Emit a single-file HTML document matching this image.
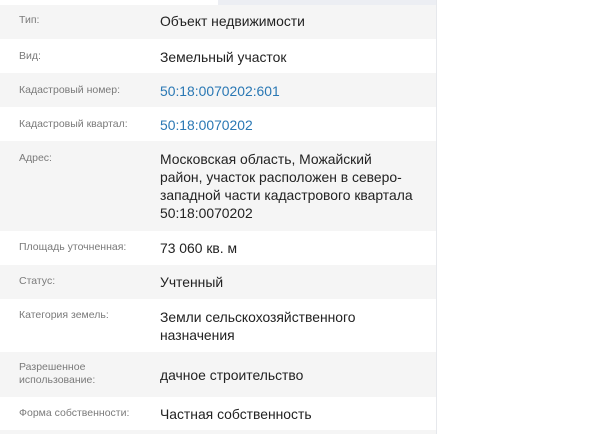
<!DOCTYPE html>
<html><head><meta charset="utf-8"><style>
*{margin:0;padding:0;box-sizing:border-box}
body{width:600px;height:434px;background:#fff;position:relative;overflow:hidden;font-family:"Liberation Sans",sans-serif}
.panel{position:absolute;left:0;top:0;width:437px;height:434px;background:#fff;border-right:1px solid #e6e8ec}
.top{position:absolute;left:218px;top:0;width:218px;height:5px;background:#eceef3}
.r{position:absolute;left:0;width:436px}
.g{background:#f5f5f5}
.l{position:absolute;left:19px;font-size:10.5px;color:#7a7a7a;line-height:13px}
.v{position:absolute;left:160px;font-size:13.9px;color:#222;line-height:18px}
.a{color:#2a78b4}
</style></head><body>
<div class="panel">
<div class="top"></div>
<div class="r g" style="top:5px;height:34px"><div class="l" style="top:9px">Тип:</div><div class="v" style="top:7px">Объект недвижимости</div></div>
<div class="r" style="top:39px;height:34px"><div class="l" style="top:11px">Вид:</div><div class="v" style="top:9px">Земельный участок</div></div>
<div class="r g" style="top:73px;height:34px"><div class="l" style="top:11px">Кадастровый номер:</div><div class="v a" style="top:9px">50:18:0070202:601</div></div>
<div class="r" style="top:107px;height:34px"><div class="l" style="top:11px">Кадастровый квартал:</div><div class="v a" style="top:9px">50:18:0070202</div></div>
<div class="r g" style="top:141px;height:90px"><div class="l" style="top:11px">Адрес:</div><div class="v" style="top:9px">Московская область, Можайский<br>район, участок расположен в северо-<br>западной части кадастрового квартала<br>50:18:0070202</div></div>
<div class="r" style="top:231px;height:34px"><div class="l" style="top:10px">Площадь уточненная:</div><div class="v" style="top:8px">73 060 кв. м</div></div>
<div class="r g" style="top:265px;height:34px"><div class="l" style="top:10px">Статус:</div><div class="v" style="top:8px">Учтенный</div></div>
<div class="r" style="top:299px;height:53px"><div class="l" style="top:10px">Категория земель:</div><div class="v" style="top:9px">Земли сельскохозяйственного<br>назначения</div></div>
<div class="r g" style="top:352px;height:45px"><div class="l" style="top:9px">Разрешенное<br>использование:</div><div class="v" style="top:14px">дачное строительство</div></div>
<div class="r" style="top:397px;height:33px"><div class="l" style="top:10px">Форма собственности:</div><div class="v" style="top:8px">Частная собственность</div></div>
<div class="r g" style="top:430px;height:4px"></div>
</div>
</body></html>
